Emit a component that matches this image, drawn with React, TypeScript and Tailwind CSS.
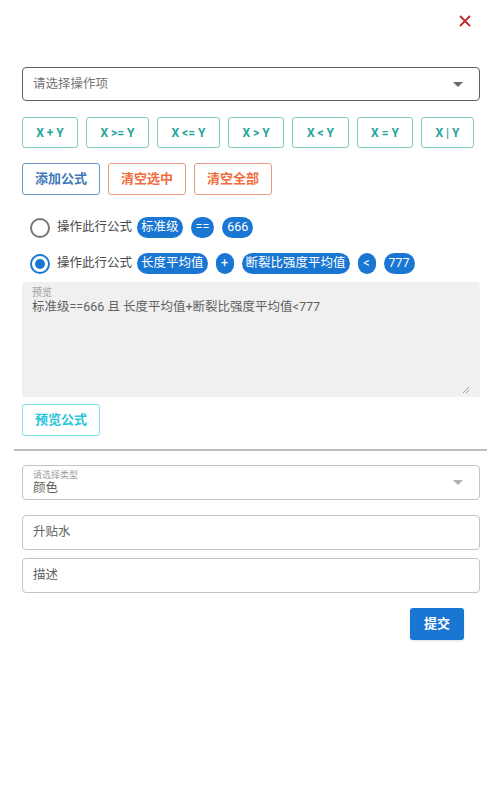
import React from "react";

const font = { fontFamily: 'Roboto, "Noto Sans CJK SC", sans-serif' };

function Chip({ children, latin }: { children: React.ReactNode; latin?: boolean }) {
  return (
    <span
      className={
        "inline-flex h-[21px] items-center justify-center rounded-full bg-[#1976d2] text-[12.5px] leading-none text-white " +
        (latin ? "min-w-[18px] px-[5px]" : "px-[4px]")
      }
    >
      {children}
    </span>
  );
}

function Radio({ checked }: { checked?: boolean }) {
  return (
    <span
      className={
        "flex h-[20px] w-[20px] items-center justify-center rounded-full border-2 " +
        (checked ? "border-[#1976d2]" : "border-[#757575]")
      }
    >
      {checked && <span className="h-[10px] w-[10px] rounded-full bg-[#1976d2]" />}
    </span>
  );
}

function Caret({ color }: { color: string }) {
  return (
    <svg width="10" height="5" viewBox="0 0 10 5">
      <path d="M0 0 L10 0 L5 5 Z" fill={color} />
    </svg>
  );
}

export default function App() {
  const ops = [
    ["X + Y", "w-[56px]"],
    ["X >= Y", "w-[63px]"],
    ["X <= Y", "w-[63px]"],
    ["X > Y", "w-[56px]"],
    ["X < Y", "w-[57px]"],
    ["X = Y", "w-[56px]"],
    ["X | Y", "w-[53px]"],
  ];
  return (
    <div className="min-h-[800px] w-[499px] bg-white" style={font}>
      <div className="flex h-[42px] items-end justify-end pr-[28px]">
        <svg width="12" height="12" viewBox="0 0 12 12" className="mb-[15px]">
          <path d="M1 1 L11 11 M11 1 L1 11" stroke="#c62828" strokeWidth="1.8" />
        </svg>
      </div>
      <div className="px-[22px] pr-[19px]">
        <div className="mt-[25px] flex h-[34px] items-center justify-between rounded-[4px] border border-[#5f5f5f] pl-[10px] pr-[16px]">
          <span className="text-[12.5px] text-[#757575]">请选择操作项</span>
          <Caret color="#6b6b6b" />
        </div>

        <div className="mt-[16px] flex gap-[8px]">
          {ops.map(([t, w]) => (
            <div
              key={t}
              className={
                "flex h-[31px] items-center justify-center rounded-[3px] border border-[#80cbc4] text-[12px] font-bold text-[#26a69a] " +
                w
              }
            >
              {t}
            </div>
          ))}
        </div>

        <div className="mt-[15px] flex gap-[8px]">
          <div className="flex h-[32px] w-[78px] items-center justify-center rounded-[3px] border border-[#6b97c9] text-[13px] font-bold text-[#3f78b8]">
            添加公式
          </div>
          <div className="flex h-[32px] w-[78px] items-center justify-center rounded-[3px] border border-[#e89a82] text-[13px] font-bold text-[#ef6c3c]">
            清空选中
          </div>
          <div className="flex h-[32px] w-[78px] items-center justify-center rounded-[3px] border border-[#e89a82] text-[13px] font-bold text-[#ef6c3c]">
            清空全部
          </div>
        </div>

        <div className="mt-[22px] flex h-[21px] items-center pl-[8px]">
          <Radio />
          <span className="ml-[7px] mr-[5px] text-[12.5px] text-[#4a4a4a]">操作此行公式</span>
          <div className="flex gap-[8px]">
            <Chip>标准级</Chip>
            <Chip latin>==</Chip>
            <Chip latin>666</Chip>
          </div>
        </div>
        <div className="mt-[15px] flex h-[21px] items-center pl-[8px]">
          <Radio checked />
          <span className="ml-[7px] mr-[5px] text-[12.5px] text-[#4a4a4a]">操作此行公式</span>
          <div className="flex gap-[8px]">
            <Chip>长度平均值</Chip>
            <Chip latin>+</Chip>
            <Chip>断裂比强度平均值</Chip>
            <Chip latin>&lt;</Chip>
            <Chip latin>777</Chip>
          </div>
        </div>

        <div className="relative mt-[8px] h-[115px] rounded-t-[4px] bg-[#f0f0f0] px-[10px] pt-[5px]">
          <div className="text-[10px] leading-[12px] text-[#9e9e9e]">预览</div>
          <div className="text-[12.5px] leading-[16px] text-[#616161]">标准级==666 且 长度平均值+断裂比强度平均值&lt;777</div>
          <svg width="8" height="8" viewBox="0 0 8 8" className="absolute bottom-[3px] right-[10px]">
            <path d="M7 1 L1 7 M7 4 L4 7" stroke="#8a8a8a" strokeWidth="0.8" />
          </svg>
        </div>

        <div className="mt-[7px] flex h-[32px] w-[78px] items-center justify-center rounded-[3px] border border-[#80deea] text-[13px] font-bold text-[#26c6da]">
          预览公式
        </div>
      </div>

      <div className="mx-[14px] mt-[13px] h-[2px] w-[473px] bg-[#bdbdbd]" />

      <div className="px-[22px] pr-[19px]">
        <div className="mt-[14px] flex h-[35px] items-center justify-between rounded-[4px] border border-[#c4c4c4] pl-[10px] pr-[16px]">
          <div className="flex flex-col">
            <span className="text-[9px] leading-[10px] text-[#9e9e9e]">请选择类型</span>
            <span className="text-[12.5px] leading-[16px] text-[#616161]">颜色</span>
          </div>
          <Caret color="#b0b0b0" />
        </div>
        <div className="mt-[15px] flex h-[35px] items-center rounded-[4px] border border-[#c4c4c4] pl-[10px] text-[12.5px] text-[#616161]">
          升贴水
        </div>
        <div className="mt-[8px] flex h-[35px] items-center rounded-[4px] border border-[#c4c4c4] pl-[10px] text-[12.5px] text-[#616161]">
          描述
        </div>
        <div className="mt-[15px] flex justify-end pr-[16px]">
          <div className="flex h-[32px] w-[54px] items-center justify-center rounded-[3px] bg-[#1976d2] text-[13px] font-bold text-white shadow-sm">
            提交
          </div>
        </div>
      </div>
    </div>
  );
}
